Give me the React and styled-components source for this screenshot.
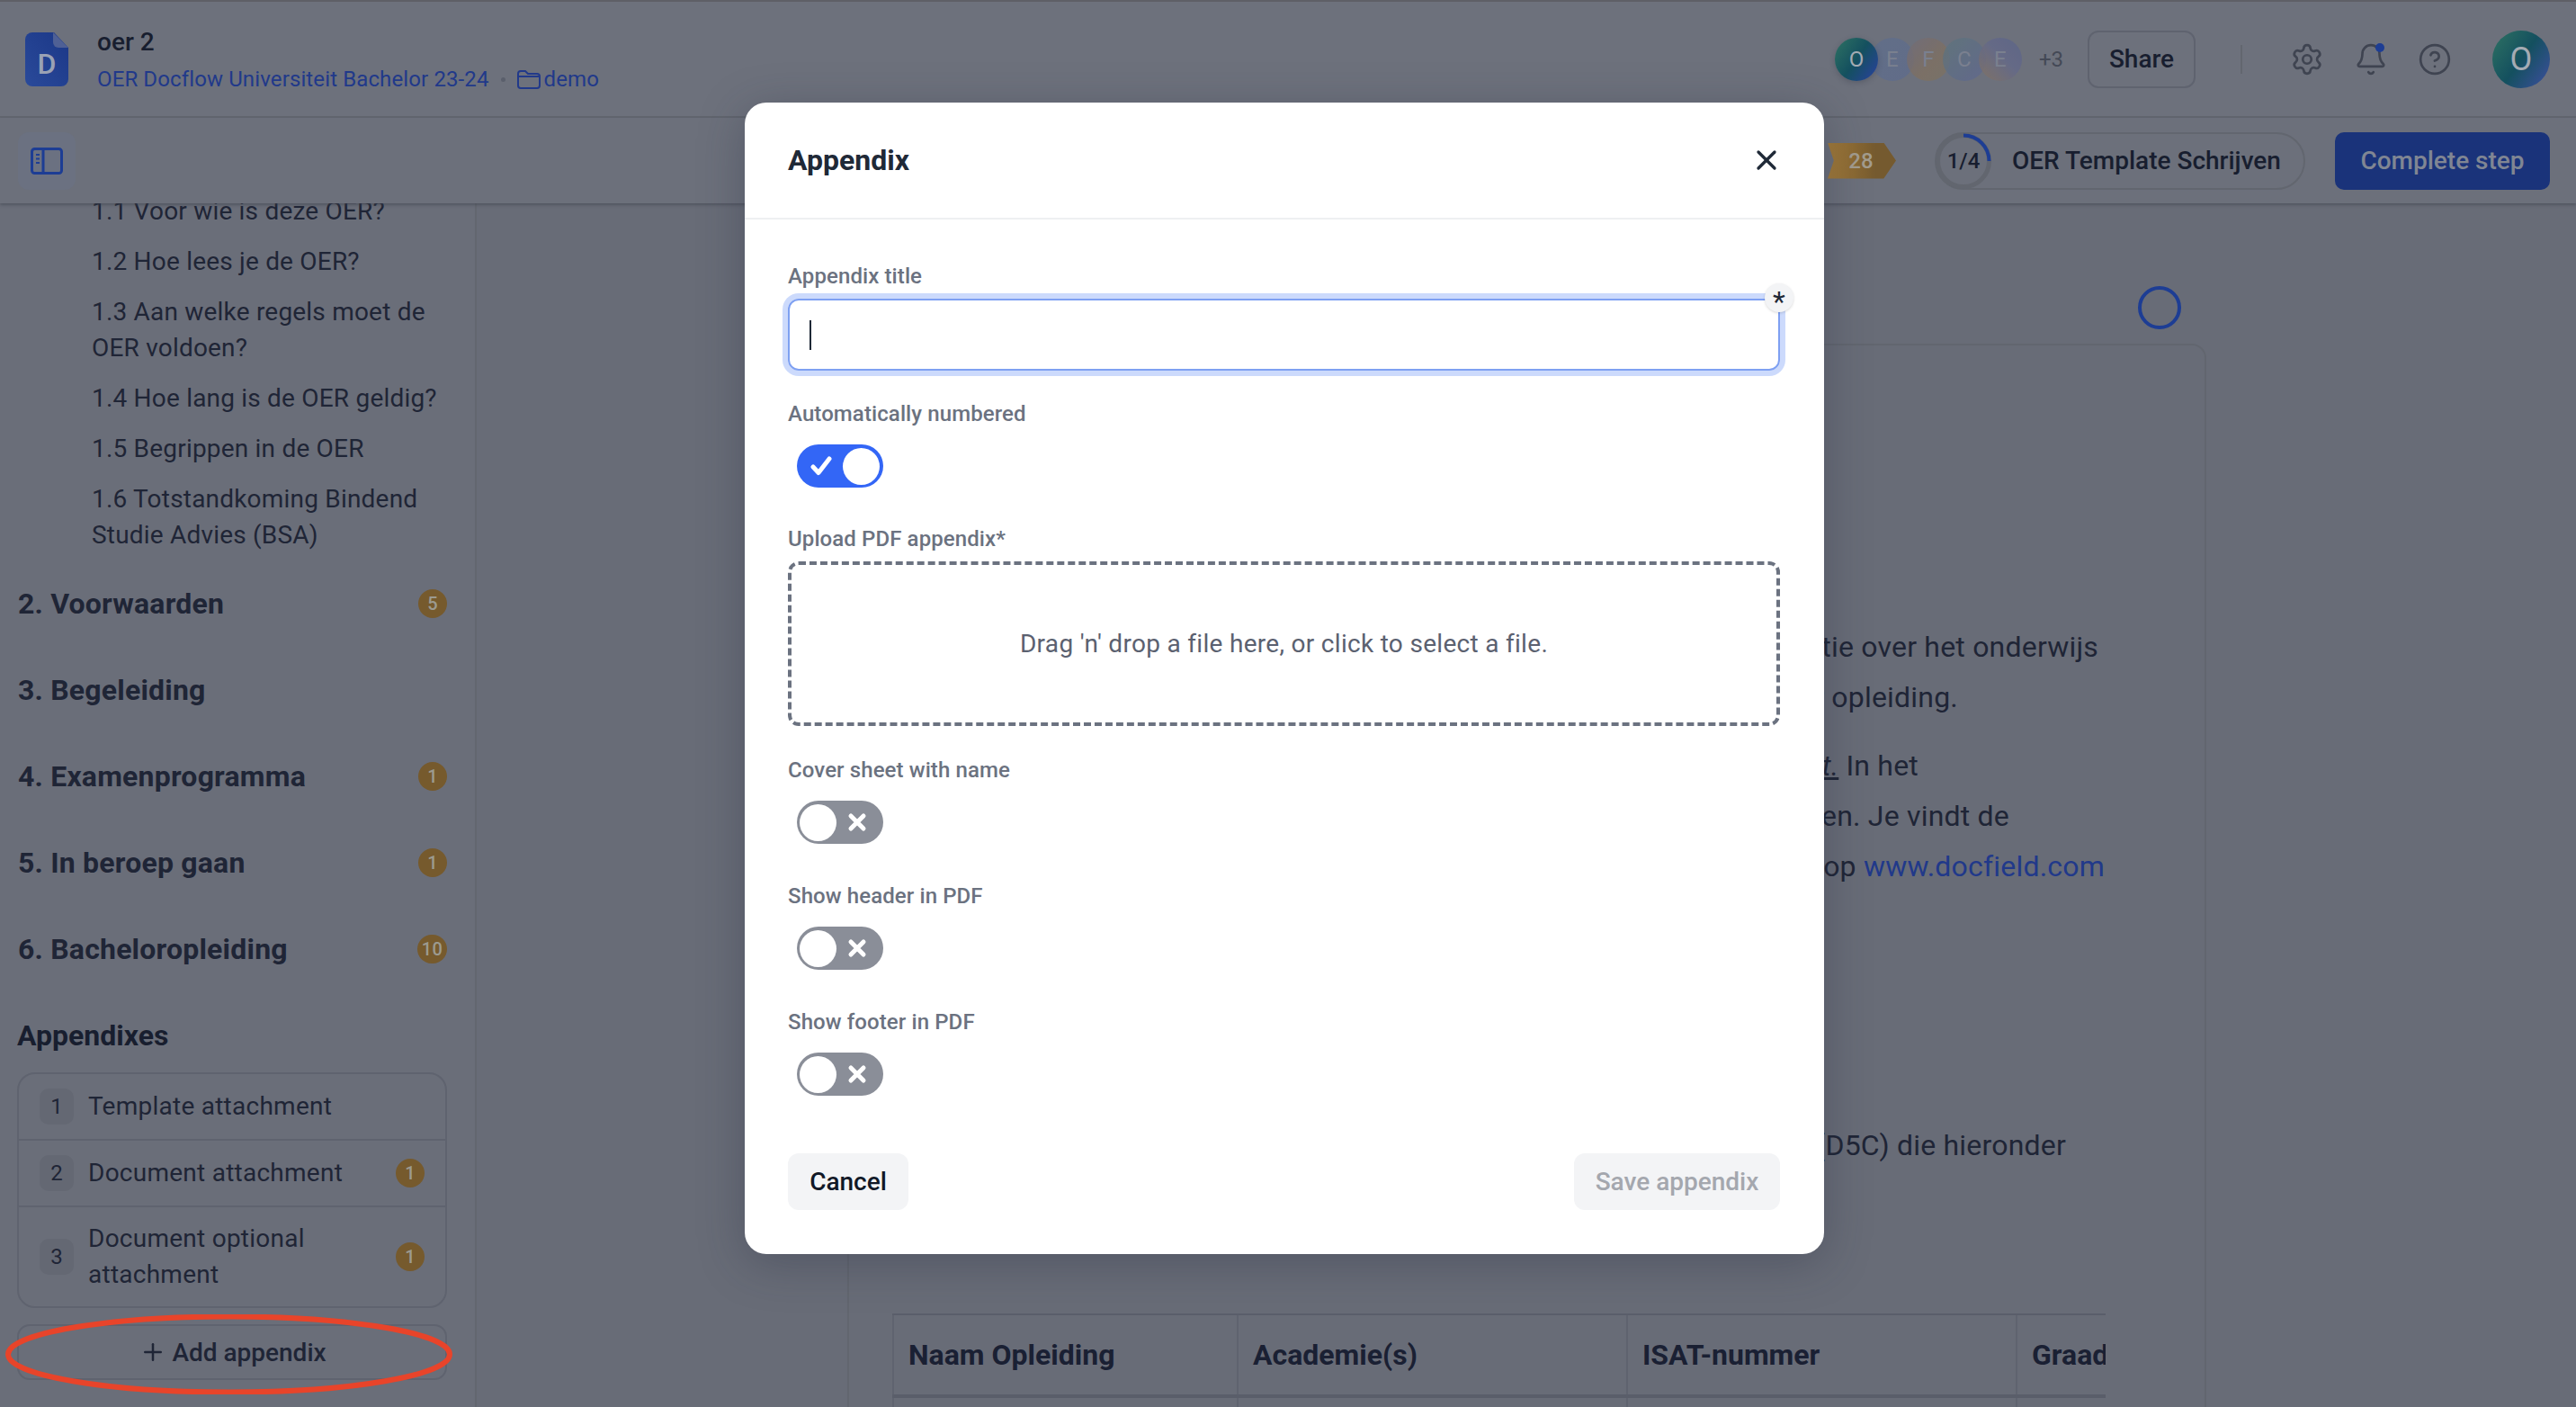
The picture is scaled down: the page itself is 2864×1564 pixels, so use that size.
import styled, { createGlobalStyle } from 'styled-components';
import { Settings, Bell, CircleHelp, X, Plus } from 'lucide-react';

const GlobalStyle = createGlobalStyle`
  html, body {
    margin: 0;
    width: 2864px;
    height: 1564px;
    overflow: hidden;
    background: #686c77;
    font-family: Roboto, "Liberation Sans", sans-serif;
    color: #1b2133;
  }
  * { box-sizing: border-box; }
`;

const subItems = [
  '1.1 Voor wie is deze OER?',
  '1.2 Hoe lees je de OER?',
  '1.3 Aan welke regels moet de OER voldoen?',
  '1.4 Hoe lang is de OER geldig?',
  '1.5 Begrippen in de OER',
  '1.6 Totstandkoming Bindend Studie Advies (BSA)',
];

const sections = [
  { title: '2. Voorwaarden', count: 5 },
  { title: '3. Begeleiding' },
  { title: '4. Examenprogramma', count: 1 },
  { title: '5. In beroep gaan', count: 1 },
  { title: '6. Bacheloropleiding', count: 10 },
];

const appendixes = [
  { nr: 1, title: 'Template attachment' },
  { nr: 2, title: 'Document attachment', count: 1 },
  { nr: 3, title: 'Document optional attachment', count: 1 },
];

const avatars = [
  { letter: 'E', bg: 'linear-gradient(135deg,#5f6e8c,#5e6b8e)' },
  { letter: 'F', bg: 'linear-gradient(135deg,#726c78,#80705f 60%,#7c7264)' },
  { letter: 'C', bg: 'linear-gradient(135deg,#5c757c,#5f6690)' },
  { letter: 'E', bg: 'linear-gradient(45deg,#86735e,#63688a 55%,#5a638a)' },
];

const columns = ['Naam Opleiding', 'Academie(s)', 'ISAT-nummer', 'Graad'];

export default function App() {
  return (
    <Page>
      <GlobalStyle />
      <TopBar>
        <DocLogo>
          <svg width="48" height="60" viewBox="0 0 48 60">
            <defs>
              <linearGradient id="doc" x1="0" y1="1" x2="1" y2="0">
                <stop offset="0" stopColor="#2a4a9a" />
                <stop offset="1" stopColor="#1b3787" />
              </linearGradient>
            </defs>
            <path d="M8 0h24l16 17v35a8 8 0 0 1-8 8H8a8 8 0 0 1-8-8V8a8 8 0 0 1 8-8z" fill="url(#doc)" />
            <path d="M31 0l17 17H37a6 6 0 0 1-6-6z" fill="#4f6095" />
          </svg>
          <DocLetter>D</DocLetter>
        </DocLogo>
        <DocInfo>
          <DocTitle>oer 2</DocTitle>
          <DocPath>
            OER Docflow Universiteit Bachelor 23-24
            <PathDot />
            <svg width="26" height="22" viewBox="0 0 26 22" fill="none" stroke="#21398a" strokeWidth="2">
              <path d="M1 5a3 3 0 0 1 3-3h5l3 3h10a3 3 0 0 1 3 3v10a3 3 0 0 1-3 3H4a3 3 0 0 1-3-3z" />
              <path d="M1 8h24" />
            </svg>
            <PathFolder>demo</PathFolder>
          </DocPath>
        </DocInfo>
        <TopRight>
          <AvatarStack>
            <Avatar $bg="linear-gradient(125deg,#2c6f62 5%,#14505f 50%,#28429a 95%)" $first>O</Avatar>
            {avatars.map((a, i) => (
              <Avatar key={i} $bg={a.bg}>{a.letter}</Avatar>
            ))}
          </AvatarStack>
          <MoreCount>+3</MoreCount>
          <ShareButton>Share</ShareButton>
          <Separator />
          <IconRow>
            <Settings size={38} strokeWidth={1.7} />
            <BellWrap>
              <Bell size={38} strokeWidth={1.7} />
              <BellDot />
            </BellWrap>
            <CircleHelp size={38} strokeWidth={1.7} />
          </IconRow>
          <UserAvatar>O</UserAvatar>
        </TopRight>
      </TopBar>

      <ActionBar>
        <PanelButton>
          <svg width="36" height="30" viewBox="0 0 36 30" fill="none" stroke="#1d3d94" strokeWidth="3">
            <rect x="1.5" y="1.5" width="33" height="27" rx="3" />
            <path d="M14 2v26" />
            <path d="M6 8h4M6 12.500h4M6 17h4" strokeWidth="2" />
          </svg>
        </PanelButton>
        <ActionRight>
          <CountTag>28</CountTag>
          <StepPill>
            <StepRing>
              <svg width="64" height="64" viewBox="0 0 64 64" fill="none">
                <circle cx="32" cy="32" r="28.500" stroke="#62666f" strokeWidth="5" />
                <path d="M32 3.500A28.500 28.500 0 0 1 60.500 32" stroke="#1d3d94" strokeWidth="4" />
              </svg>
              <StepCount>1/4</StepCount>
            </StepRing>
            <StepName>OER Template Schrijven</StepName>
          </StepPill>
          <CompleteButton>Complete step</CompleteButton>
        </ActionRight>
      </ActionBar>

      <Body>
        <Sidebar>
          <SubList>
            {subItems.map((s) => <SubItem key={s}>{s}</SubItem>)}
          </SubList>
          <Sections>
            {sections.map((s) => (
              <Section key={s.title}>
                {s.title}
                {s.count && <CountBadge>{s.count}</CountBadge>}
              </Section>
            ))}
          </Sections>
          <AppendixHeading>Appendixes</AppendixHeading>
          <AppendixList>
            {appendixes.map((a) => (
              <AppendixRow key={a.nr}>
                <NumberChip>{a.nr}</NumberChip>
                <AppendixName>{a.title}</AppendixName>
                {a.count && <CountBadge>{a.count}</CountBadge>}
              </AppendixRow>
            ))}
          </AppendixList>
          <AddWrap>
            <AddButton><Plus size={30} strokeWidth={2} />Add appendix</AddButton>
            <Annotation width="497" height="89" viewBox="0 0 497 89" fill="none">
              <ellipse cx="248.500" cy="44.500" rx="245.500" ry="42" stroke="#e8442a" strokeWidth="6" />
            </Annotation>
          </AddWrap>
        </Sidebar>

        <Main>
          <StatusRow><StatusCircle /></StatusRow>
          <DocCard>
            <TextLine $end={8}>informatie over het onderwijs</TextLine>
            <TextLine $end={164}>informatie voor opleiding.</TextLine>
            <TextLine $end={208} $gap={20}><u><em>Universiteit.</em></u> In het</TextLine>
            <TextLine $end={107}>opgenomen. Je vindt de</TextLine>
            <TextLine $end={1}>beschikbaar op <DocLink>www.docfield.com</DocLink></TextLine>
            <TextLine $end={44} $gap={254}>(D5C) die hieronder</TextLine>
            <Table>
              <TableHead>
                {columns.map((c) => <HeadCell key={c}>{c}</HeadCell>)}
              </TableHead>
              <TableRow>
                {columns.map((c) => <BodyCell key={c} />)}
              </TableRow>
            </Table>
          </DocCard>
        </Main>
      </Body>

      <Modal>
        <ModalHeader>
          <ModalTitle>Appendix</ModalTitle>
          <CloseButton><X size={36} strokeWidth={2.2} /></CloseButton>
        </ModalHeader>
        <ModalBody>
          <Field $top={47}>
            <Label>Appendix title</Label>
            <InputBox>
              <Caret />
              <Required>*</Required>
            </InputBox>
          </Field>
          <Field $top={32}>
            <Label $space={18}>Automatically numbered</Label>
            <Toggle on />
          </Field>
          <Field $top={41}>
            <Label>Upload PDF appendix*</Label>
            <DropZone>Drag 'n' drop a file here, or click to select a file.</DropZone>
          </Field>
          <Field $top={33}>
            <Label $space={18}>Cover sheet with name</Label>
            <Toggle />
          </Field>
          <Field $top={42}>
            <Label $space={18}>Show header in PDF</Label>
            <Toggle />
          </Field>
          <Field $top={42}>
            <Label $space={18}>Show footer in PDF</Label>
            <Toggle />
          </Field>
          <ModalFooter>
            <CancelButton>Cancel</CancelButton>
            <SaveButton>Save appendix</SaveButton>
          </ModalFooter>
        </ModalBody>
      </Modal>
    </Page>
  );
}

function Toggle({ on }) {
  return (
    <Switch $on={on}>
      {on ? (
        <>
          <svg width="24" height="22" viewBox="0 0 24 22" fill="none" stroke="#fff" strokeWidth="5" strokeLinecap="round" strokeLinejoin="round">
            <path d="M3 12L9 18.500L21 3" />
          </svg>
          <Thumb />
        </>
      ) : (
        <>
          <Thumb />
          <svg width="22" height="22" viewBox="0 0 22 22" fill="none" stroke="#fff" strokeWidth="5" strokeLinecap="round">
            <path d="M4 4l14 14M18 4L4 18" />
          </svg>
        </>
      )}
    </Switch>
  );
}

const Page = styled.div`
  position: relative;
  width: 2864px;
  height: 1564px;
  display: flex;
  flex-direction: column;
  overflow: hidden;
  background: #686c77;
`;

const TopBar = styled.header`
  height: 131px;
  flex: none;
  display: flex;
  align-items: center;
  padding: 0 29px 0 28px;
  background: #6d717c;
  border-top: 2px solid #5e5f66;
  border-bottom: 2px solid #62666f;
`;

const DocLogo = styled.div`
  position: relative;
  width: 48px;
  height: 60px;
  flex: none;
  svg { display: block; }
`;

const DocLetter = styled.span`
  position: absolute;
  left: 0;
  right: 0;
  bottom: 7px;
  text-align: center;
  font-size: 32px;
  line-height: 36px;
  font-weight: 500;
  color: #9aa2b4;
`;

const DocInfo = styled.div`
  margin-left: 32px;
  padding-top: 2px;
  display: flex;
  flex-direction: column;
  gap: 7px;
`;

const DocTitle = styled.div`
  font-size: 28px;
  line-height: 36px;
  font-weight: 500;
  color: #181e2f;
`;

const DocPath = styled.div`
  display: flex;
  align-items: center;
  font-size: 24px;
  line-height: 32px;
  letter-spacing: .12px;
  color: #21398a;
`;

const PathDot = styled.span`
  width: 5px;
  height: 5px;
  margin: 0 13px;
  border-radius: 50%;
  background: #5a5f6c;
`;

const PathFolder = styled.span`
  margin-left: 4px;
`;

const TopRight = styled.div`
  margin-left: auto;
  display: flex;
  align-items: center;
`;

const AvatarStack = styled.div`
  display: flex;
`;

const Avatar = styled.div`
  position: relative;
  z-index: ${(p) => (p.$first ? 2 : 1)};
  width: 48px;
  height: 48px;
  border-radius: 50%;
  display: flex;
  align-items: center;
  justify-content: center;
  font-size: 24px;
  color: ${(p) => (p.$first ? '#a4abb3' : '#7f8596')};
  background: ${(p) => p.$bg};
  opacity: ${(p) => (p.$first ? 1 : 0.75)};
  box-shadow: ${(p) => (p.$first ? '0 2px 6px rgba(30,35,50,.25)' : 'none')};
  & + & { margin-left: -8px; }
`;

const MoreCount = styled.span`
  margin-left: 19px;
  font-size: 24px;
  color: #444956;
`;

const ShareButton = styled.button`
  margin-left: 27px;
  width: 120px;
  height: 64px;
  border: 2px solid #5f636f;
  border-radius: 12px;
  background: transparent;
  font: 500 28px Roboto, sans-serif;
  color: #181e2f;
`;

const Separator = styled.div`
  width: 2px;
  height: 32px;
  margin: 0 53px 0 50px;
  background: #62666f;
`;

const IconRow = styled.div`
  display: flex;
  align-items: center;
  gap: 33px;
  color: #3f4451;
  svg { display: block; }
`;

const BellWrap = styled.div`
  position: relative;
`;

const BellDot = styled.span`
  position: absolute;
  top: 1px;
  right: 4px;
  width: 10px;
  height: 10px;
  border-radius: 50%;
  background: #1d3d94;
`;

const UserAvatar = styled.div`
  margin-left: 45px;
  width: 64px;
  height: 64px;
  border-radius: 50%;
  display: flex;
  align-items: center;
  justify-content: center;
  font-size: 36px;
  color: #a4abb3;
  background: linear-gradient(125deg, #2c6f62 5%, #14505f 50%, #3a4f9a 95%);
`;

const ActionBar = styled.div`
  position: relative;
  z-index: 2;
  height: 95px;
  flex: none;
  display: flex;
  align-items: center;
  padding: 0 29px 0 20px;
  background: #6c707b;
  box-shadow: 0 2px 3px rgba(60,64,75,.5);
`;

const PanelButton = styled.div`
  width: 64px;
  height: 64px;
  border-radius: 12px;
  display: flex;
  align-items: center;
  justify-content: center;
  background: #6b7181;
`;

const ActionRight = styled.div`
  margin-left: auto;
  display: flex;
  align-items: center;
`;

const CountTag = styled.div`
  width: 76px;
  height: 40px;
  display: flex;
  align-items: center;
  justify-content: center;
  padding-right: 2px;
  font-size: 24px;
  font-weight: 500;
  color: #a39c8e;
  background: linear-gradient(90deg, #a57c38, #755a2f 70%);
  clip-path: polygon(0 0, 82% 0, 100% 50%, 82% 100%, 0 100%, 9% 50%);
`;

const StepPill = styled.div`
  margin-left: 43px;
  width: 412px;
  height: 64px;
  display: flex;
  align-items: center;
  border: 2px solid #62666f;
  border-radius: 32px;
`;

const StepRing = styled.div`
  position: relative;
  width: 64px;
  height: 64px;
  margin-left: -2px;
  flex: none;
  svg { display: block; }
`;

const StepCount = styled.span`
  position: absolute;
  inset: 0;
  display: flex;
  align-items: center;
  justify-content: center;
  font-size: 24px;
  font-weight: 500;
  color: #181e2f;
`;

const StepName = styled.span`
  margin-left: 22px;
  font-size: 28px;
  font-weight: 500;
  color: #181e2f;
  white-space: nowrap;
`;

const CompleteButton = styled.button`
  margin-left: 33px;
  width: 239px;
  height: 64px;
  border: none;
  border-radius: 10px;
  background: #1a337a;
  font: 500 28px Roboto, sans-serif;
  color: #808693;
`;

const Body = styled.div`
  flex: 1;
  min-height: 0;
  display: flex;
`;

const Sidebar = styled.aside`
  width: 530px;
  flex: none;
  padding: 0 31px 0 19px;
  background: #6a6e79;
  border-right: 2px solid #62666f;
  overflow: hidden;
`;

const SubList = styled.div`
  margin-top: -11px;
  padding-left: 83px;
  display: flex;
  flex-direction: column;
  gap: 16px;
`;

const SubItem = styled.div`
  font-size: 28px;
  line-height: 40px;
  letter-spacing: .2px;
  color: #1f2536;
`;

const Sections = styled.div`
  margin-top: 8px;
`;

const Section = styled.div`
  height: 96px;
  display: flex;
  align-items: center;
  justify-content: space-between;
  padding-left: 1px;
  font-size: 32px;
  font-weight: 700;
  letter-spacing: .2px;
  color: #1f2536;
`;

const CountBadge = styled.span`
  min-width: 32px;
  height: 32px;
  padding: 0 5px;
  flex: none;
  border-radius: 16px;
  display: flex;
  align-items: center;
  justify-content: center;
  font-size: 20px;
  font-weight: 500;
  color: #9c9a90;
  background: #765a2d;
`;

const AppendixHeading = styled.h3`
  margin: 28px 0 21px;
  font-size: 32px;
  line-height: 40px;
  font-weight: 700;
  color: #181e2f;
`;

const AppendixList = styled.div`
  border: 2px solid #5f636f;
  border-radius: 20px;
`;

const AppendixRow = styled.div`
  display: flex;
  align-items: center;
  gap: 16px;
  padding: 16px 23px;
  border-bottom: 2px solid #5f636f;
  &:last-child {
    padding: 15px 23px;
    border-bottom: none;
  }
`;

const NumberChip = styled.span`
  width: 38px;
  height: 40px;
  flex: none;
  border-radius: 10px;
  display: flex;
  align-items: center;
  justify-content: center;
  font-size: 24px;
  color: #1f2536;
  background: #646873;
`;

const AppendixName = styled.span`
  flex: 1;
  font-size: 28px;
  line-height: 40px;
  letter-spacing: .25px;
  color: #1f2536;
  padding-right: 40px;
`;

const AddWrap = styled.div`
  position: relative;
  margin-top: 18px;
`;

const AddButton = styled.div`
  height: 62px;
  padding-left: 2px;
  border: 2px solid #5f636f;
  border-radius: 14px;
  display: flex;
  align-items: center;
  justify-content: center;
  gap: 6px;
  font-size: 28px;
  font-weight: 500;
  color: #1f2536;
`;

const Annotation = styled.svg`
  position: absolute;
  left: -13px;
  top: -11px;
`;

const Main = styled.main`
  flex: 1;
  min-width: 0;
  padding: 92px 0 0 412px;
  background: #686c77;
`;

const StatusRow = styled.div`
  width: 1511px;
  display: flex;
  justify-content: flex-end;
  padding-right: 28px;
`;

const StatusCircle = styled.div`
  width: 48px;
  height: 48px;
  border-radius: 50%;
  border: 4px solid #1d3d94;
`;

const DocCard = styled.article`
  width: 1511px;
  height: 1400px;
  margin-top: 16px;
  padding: 307px 110px 0 48px;
  border: 2px solid #62666f;
  border-radius: 16px 16px 0 0;
`;

const TextLine = styled.p`
  margin: ${(p) => p.$gap || 0}px 0 0;
  padding-right: ${(p) => p.$end}px;
  font-size: 32px;
  line-height: 56px;
  letter-spacing: .2px;
  text-align: right;
  white-space: nowrap;
  color: #1f2536;
`;

const DocLink = styled.span`
  color: #21398a;
`;

const Table = styled.div`
  margin-top: 159px;
  width: 1349px;
  overflow: hidden;
`;

const TableHead = styled.div`
  display: grid;
  grid-template-columns: 383px 433px 433px 400px;
  width: 1649px;
  height: 94px;
  border-top: 2px solid #5a5e6a;
  border-bottom: 4px solid #5a5e6a;
`;

const HeadCell = styled.div`
  display: flex;
  align-items: center;
  padding-left: 16px;
  border-left: 2px solid #5f636f;
  font-size: 32px;
  font-weight: 700;
  color: #1a2033;
`;

const TableRow = styled.div`
  display: grid;
  grid-template-columns: 383px 433px 433px 400px;
  width: 1649px;
  height: 80px;
`;

const BodyCell = styled.div`
  border-left: 2px solid #5f636f;
`;

const Modal = styled.div`
  position: absolute;
  z-index: 10;
  left: 828px;
  top: 114px;
  width: 1200px;
  height: 1280px;
  background: #fff;
  border-radius: 24px;
  box-shadow: 0 10px 50px rgba(40, 46, 65, .35);
`;

const ModalHeader = styled.div`
  height: 130px;
  display: flex;
  align-items: center;
  justify-content: space-between;
  padding: 0 46px 0 48px;
  border-bottom: 2px solid #eef0f2;
`;

const ModalTitle = styled.h2`
  margin: 0;
  font-size: 32px;
  font-weight: 700;
  color: #1f2937;
`;

const CloseButton = styled.div`
  color: #1f2937;
  svg { display: block; }
`;

const ModalBody = styled.div`
  padding: 0 49px 0 48px;
`;

const Field = styled.div`
  margin-top: ${(p) => p.$top}px;
`;

const Label = styled.div`
  margin-bottom: ${(p) => p.$space || 9}px;
  font-size: 24px;
  line-height: 32px;
  letter-spacing: .1px;
  font-weight: 500;
  color: #6b7280;
`;

const InputBox = styled.div`
  position: relative;
  height: 80px;
  display: flex;
  align-items: center;
  padding-left: 22px;
  border: 2px solid #7ea0f2;
  border-radius: 12px;
  box-shadow: 0 0 0 6px #ccdafc;
`;

const Caret = styled.span`
  width: 2px;
  height: 33px;
  background: #1f2937;
`;

const Required = styled.span`
  position: absolute;
  right: -17px;
  top: -19px;
  width: 32px;
  height: 32px;
  border-radius: 50%;
  display: flex;
  align-items: center;
  justify-content: center;
  padding-top: 8px;
  font-size: 32px;
  line-height: 1;
  color: #1f2937;
  background: #f3f4f6;
  box-shadow: 0 1px 3px rgba(0,0,0,.15);
`;

const Switch = styled.div`
  width: 96px;
  height: 48px;
  margin-left: 10px;
  border-radius: 24px;
  display: flex;
  align-items: center;
  justify-content: space-between;
  padding: ${(p) => (p.$on ? '0 4px 0 15px' : '0 18px 0 3px')};
  background: ${(p) => (p.$on ? '#3366f6' : '#8a8e98')};
`;

const Thumb = styled.span`
  width: 41px;
  height: 41px;
  border-radius: 50%;
  background: #fff;
`;

const DropZone = styled.div`
  height: 183px;
  display: flex;
  align-items: center;
  justify-content: center;
  border: 4px dashed #6b7280;
  border-radius: 12px;
  font-size: 28px;
  letter-spacing: .3px;
  color: #5b6170;
`;

const ModalFooter = styled.div`
  margin-top: 64px;
  display: flex;
  justify-content: space-between;
`;

const CancelButton = styled.button`
  width: 134px;
  height: 63px;
  border: none;
  border-radius: 12px;
  background: #f3f4f6;
  font: 500 28px Roboto, sans-serif;
  color: #111827;
`;

const SaveButton = styled(CancelButton)`
  width: 229px;
  color: #a4a7ae;
`;
